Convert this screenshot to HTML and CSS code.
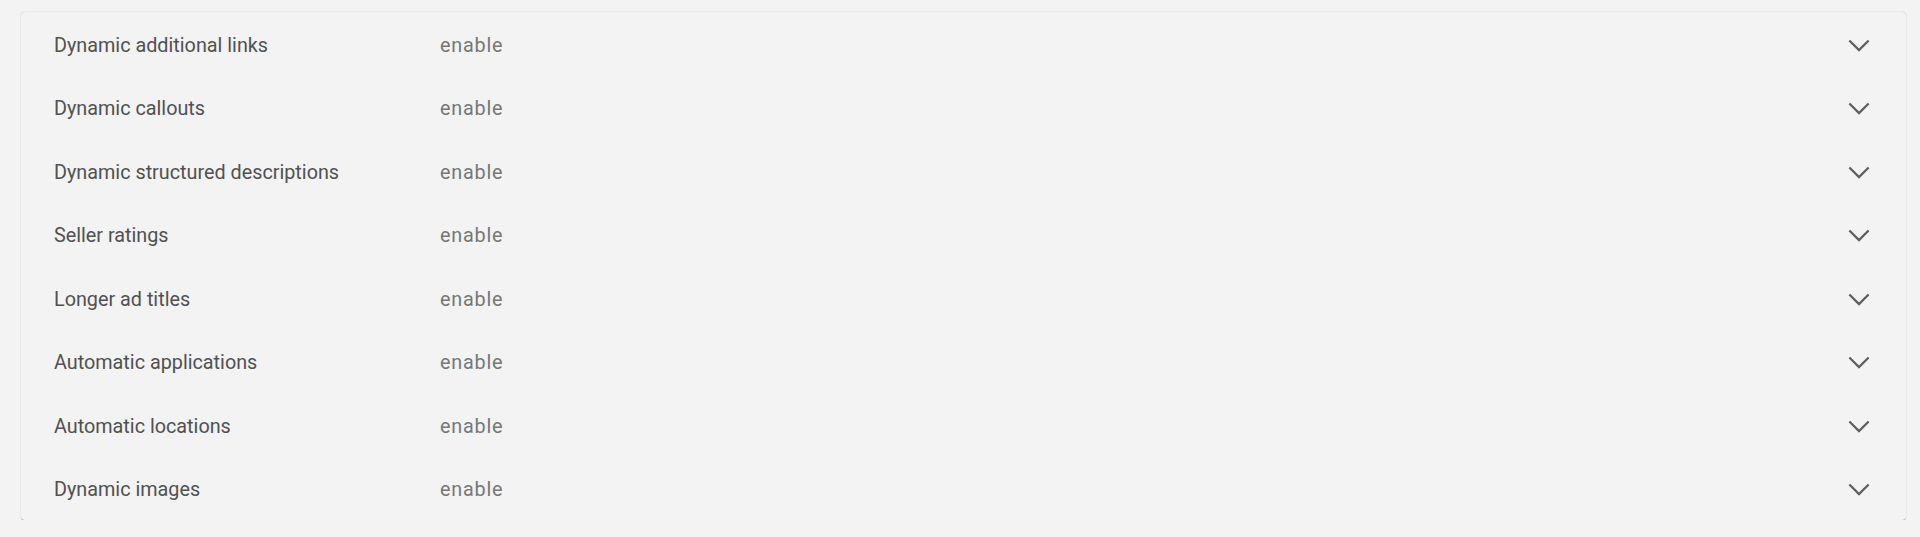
FILE: index.html
```html
<!DOCTYPE html>
<html lang="en">
<head>
  <meta charset="UTF-8">
  <title>Extensions</title>
  <link rel="stylesheet" href="styles.css">
</head>
<body>
  <div class="panels">
    <div class="panel">
      <span class="label">Dynamic additional links</span>
      <span class="state">enable</span>
      <svg class="chevron" viewBox="0 0 24 14"><polyline points="1.5,1.5 12,12 22.5,1.5"/></svg>
    </div>
    <div class="panel">
      <span class="label">Dynamic callouts</span>
      <span class="state">enable</span>
      <svg class="chevron" viewBox="0 0 24 14"><polyline points="1.5,1.5 12,12 22.5,1.5"/></svg>
    </div>
    <div class="panel">
      <span class="label">Dynamic structured descriptions</span>
      <span class="state">enable</span>
      <svg class="chevron" viewBox="0 0 24 14"><polyline points="1.5,1.5 12,12 22.5,1.5"/></svg>
    </div>
    <div class="panel">
      <span class="label">Seller ratings</span>
      <span class="state">enable</span>
      <svg class="chevron" viewBox="0 0 24 14"><polyline points="1.5,1.5 12,12 22.5,1.5"/></svg>
    </div>
    <div class="panel">
      <span class="label">Longer ad titles</span>
      <span class="state">enable</span>
      <svg class="chevron" viewBox="0 0 24 14"><polyline points="1.5,1.5 12,12 22.5,1.5"/></svg>
    </div>
    <div class="panel">
      <span class="label">Automatic applications</span>
      <span class="state">enable</span>
      <svg class="chevron" viewBox="0 0 24 14"><polyline points="1.5,1.5 12,12 22.5,1.5"/></svg>
    </div>
    <div class="panel">
      <span class="label">Automatic locations</span>
      <span class="state">enable</span>
      <svg class="chevron" viewBox="0 0 24 14"><polyline points="1.5,1.5 12,12 22.5,1.5"/></svg>
    </div>
    <div class="panel">
      <span class="label">Dynamic images</span>
      <span class="state">enable</span>
      <svg class="chevron" viewBox="0 0 24 14"><polyline points="1.5,1.5 12,12 22.5,1.5"/></svg>
    </div>
  </div>
</body>
</html>
```

FILE: styles.css
```css
*{
  margin: 0;
  padding: 0;
}
body{
  background: #f2f3f2;
  font-family: Roboto, "Liberation Sans", sans-serif;
}
.panels{
  margin: 12px 14px 0 21px;
  border-radius: 4px;
  background: #f2f3f2;
  box-shadow: 0 2px 0 -0.5px rgba(0,0,0,0.22), 0 0 1px rgba(0,0,0,0.35);
}
.panel{
  display: flex;
  align-items: center;
  height: 63.5px;
  padding: 3px 36px 0 33px;
  box-sizing: border-box;
}
.label{
  width: 386px;
  font-size: 19.8px;
  color: #515151;
}
.state{
  flex: 1;
  font-size: 19.8px;
  letter-spacing: 0.8px;
  color: #777;
}
.chevron{
  width: 22px;
  height: 13px;
  fill: none;
  stroke: #5f5f5f;
  stroke-width: 2.5;
}
```
